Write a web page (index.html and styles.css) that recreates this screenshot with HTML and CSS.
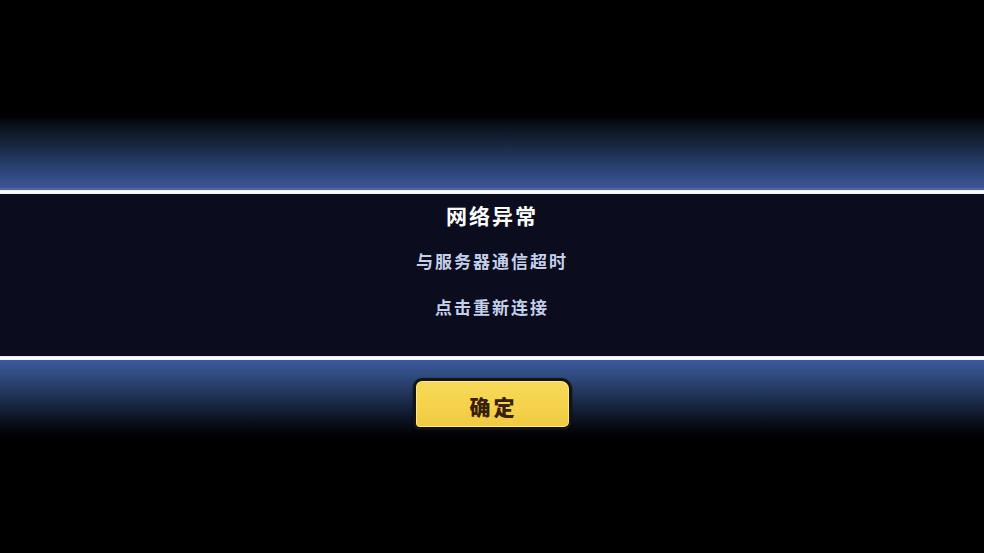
FILE: index.html
```html
<!DOCTYPE html>
<html lang="zh-CN">
<head>
<meta charset="utf-8">
<title>网络异常</title>
<link rel="stylesheet" href="styles.css">
</head>
<body>
<div class="screen">
  <div class="top-space"></div>
  <div class="glow glow-top"></div>
  <div class="rule"></div>
  <section class="dialog">
    <h1 class="title">网络异常</h1>
    <p class="msg">与服务器通信超时</p>
    <p class="msg">点击重新连接</p>
  </section>
  <div class="rule"></div>
  <div class="bottom">
    <button class="ok-btn" type="button">确定</button>
  </div>
</div>
</body>
</html>
```
FILE: styles.css
```css
html, body {
  margin: 0;
  padding: 0;
  background: #000;
}

.screen {
  width: 984px;
  height: 553px;
  display: flex;
  flex-direction: column;
  background: #000;
  font-family: "Noto Sans CJK SC", "Noto Sans", sans-serif;
  overflow: hidden;
}

.top-space {
  height: 118px;
  flex: none;
}

.glow {
  flex: none;
}

.glow-top {
  height: 70px;
  background: linear-gradient(to bottom,
    #03040a 0%,
    #0d1522 16%,
    #182842 40%,
    #293f6e 68%,
    #3b5598 100%);
  border-bottom: 2px solid #4f6795;
}

.rule {
  height: 4px;
  flex: none;
  background: linear-gradient(to bottom, #d8e4f4 0%, #ffffff 40%, #eef3fb 100%);
}

.dialog {
  height: 162px;
  flex: none;
  background: #0b0c1e;
  display: flex;
  flex-direction: column;
  align-items: center;
  box-sizing: border-box;
  padding-top: 5px;
}

.title {
  margin: 0;
  color: #ffffff;
  font-size: 21px;
  font-weight: 700;
  letter-spacing: 2px;
  line-height: 32px;
}

.msg {
  margin: 0;
  color: #c4d0ea;
  font-size: 17px;
  font-weight: 700;
  letter-spacing: 2px;
  line-height: 24px;
}

.title + .msg {
  margin-top: 18px;
}

.msg + .msg {
  margin-top: 22px;
}

.bottom {
  flex: 1;
  display: flex;
  justify-content: center;
  align-items: flex-start;
  padding-top: 18px;
  background: linear-gradient(to bottom,
    #3e58a0 0px,
    #304c80 14px,
    #22375e 32px,
    #131f36 50px,
    #070b14 66px,
    #000000 78px);
}

.ok-btn {
  width: 159px;
  height: 52px;
  box-sizing: border-box;
  border: 3px solid #141414;
  border-radius: 9px 11px 8px 7px;
  background: linear-gradient(to bottom, #f7d95a 0%, #f5d34a 55%, #efc941 100%);
  box-shadow: inset 0 0 0 1px #ffe98a, 0 1px 2px rgba(0, 0, 0, 0.6);
  color: #3a2006;
  font-family: "Noto Sans CJK SC", "Noto Sans", sans-serif;
  font-size: 21px;
  font-weight: 900;
  letter-spacing: 3px;
  padding: 4px 0 0 3px;
  line-height: 1;
  cursor: pointer;
}
```
